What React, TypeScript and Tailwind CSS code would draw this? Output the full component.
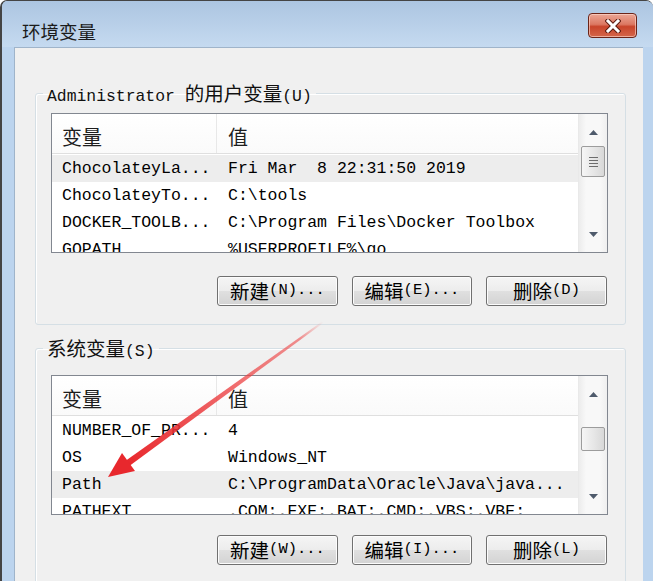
import React from "react";

const MONO = "font-['Liberation_Mono','Noto_Sans_CJK_SC',monospace]";
const CJK = "font-['Noto_Sans_CJK_SC',sans-serif]";

type Row = [string, string];

const userRows: Row[] = [
    ["ChocolateyLa...", "Fri Mar  8 22:31:50 2019"],
    ["ChocolateyTo...", "C:\\tools"],
    ["DOCKER_TOOLB...", "C:\\Program Files\\Docker Toolbox"],
    ["GOPATH", "%USERPROFILE%\\go"],
];

const systemRows: Row[] = [
    ["NUMBER_OF_PR...", "4"],
    ["OS", "Windows_NT"],
    ["Path", "C:\\ProgramData\\Oracle\\Java\\java..."],
    ["PATHEXT", ".COM;.EXE;.BAT;.CMD;.VBS;.VBE;"],
];

function Zh({ children }: { children: React.ReactNode }) {
    return <span className={`${CJK} text-[19.5px]`}>{children}</span>;
}

function Arrow({ up }: { up?: boolean }) {
    return (
        <svg width="9" height="5" viewBox="0 0 9 5">
            <path d={up ? "M4.5 0 L9 5 L0 5Z" : "M0 0 L9 0 L4.5 5Z"} fill="#4f5b6c" />
        </svg>
    );
}

function ScrollBar({ thumbTop, thumbH, grip }: { thumbTop: number; thumbH: number; grip?: boolean }) {
    return (
        <div className="w-[29px] flex flex-col border-l border-[#e9e9e9] bg-[linear-gradient(to_right,#ececec,#f8f8f8_25%,#f8f8f8_75%,#efefef)]">
            <div className="h-[30px] flex items-center justify-center pt-[6px]">
                <Arrow up />
            </div>
            <div className="flex-1 px-[2px]">
                <div
                    className="w-[24px] rounded-[2px] border border-[#9c9c9c] bg-[linear-gradient(to_right,#f6f6f6,#e6e6e6_55%,#d8d8d8)] flex flex-col items-center justify-center gap-[2px]"
                    style={{ marginTop: thumbTop, height: thumbH }}
                >
                    {grip && (
                        <>
                            <div className="w-[9px] h-[1px] bg-[#6d6d6d]" />
                            <div className="w-[9px] h-[1px] bg-[#6d6d6d]" />
                            <div className="w-[9px] h-[1px] bg-[#6d6d6d]" />
                            <div className="w-[9px] h-[1px] bg-[#6d6d6d]" />
                        </>
                    )}
                </div>
            </div>
            <div className="h-[30px] flex items-center justify-center pb-[6px]">
                <Arrow />
            </div>
        </div>
    );
}

function ListView({ rows, selected, h, thumbTop, thumbH, grip }: {
    rows: Row[]; selected: number; h: string; thumbTop: number; thumbH: number; grip?: boolean;
}) {
    return (
        <div className={`${h} flex border border-[#828790] bg-white overflow-hidden`}>
            <div className="flex-1 flex flex-col overflow-hidden">
                <div className="h-[40px] shrink-0 flex border-b border-[#dfdfdf] bg-[linear-gradient(to_bottom,#ffffff,#fafafa)] text-[#1e1e1e]">
                    <div className={`${CJK} w-[165px] border-r border-[#e8e8e8] pl-[10px] pt-[8px] text-[20px] leading-[30px]`}>变量</div>
                    <div className={`${CJK} pl-[11px] pt-[8px] text-[20px] leading-[30px]`}>值</div>
                </div>
                <div className="h-[1px] shrink-0" />
                {rows.map((r, i) => (
                    <div
                        key={r[0]}
                        className={`${MONO} h-[27px] shrink-0 flex items-center text-[16.5px] leading-[27px] text-black whitespace-pre ${i === selected ? "bg-[#ededed]" : ""}`}
                    >
                        <div className="w-[165px] pl-[10px]">{r[0]}</div>
                        <div className="pl-[11px]">{r[1]}</div>
                    </div>
                ))}
            </div>
            <ScrollBar thumbTop={thumbTop} thumbH={thumbH} grip={grip} />
        </div>
    );
}

function WinButton({ zh, rest, w }: { zh: string; rest: string; w: string }) {
    return (
        <button className={`${w} h-[30px] rounded-[3px] border border-[#707070] shadow-[inset_0_0_0_1px_#fcfcfc] bg-[linear-gradient(to_bottom,#f5f5f5_0%,#ececec_50%,#e0e0e0_50%,#d3d3d3_100%)] flex items-center justify-center text-black`}>
            <Zh>{zh}</Zh>
            <span className={`${MONO} text-[15.5px]`}>{rest}</span>
        </button>
    );
}

function Group({ label, children, className }: { label: React.ReactNode; children: React.ReactNode; className: string }) {
    return (
        <fieldset className={`${className} border border-[#d5dfe5] rounded-[3px] shadow-[inset_1px_1px_0_#ffffff]`}>
            <legend className="ml-[7px] px-[4px] h-[22px] leading-[22px] text-[#111]">{label}</legend>
            {children}
        </fieldset>
    );
}

export default function App() {
    return (
        <div className="relative w-[653px] h-[581px] overflow-hidden flex flex-col border-l-[2px] border-t border-[#444] rounded-tl-[7px] rounded-tr-[7px] bg-[#bcd4ee]">
            {/* Title bar */}
            <div className="h-[46px] shrink-0 flex items-start justify-between pl-[20px] pr-[16px] bg-[linear-gradient(to_bottom,#acc5e1,#c5daf0)]">
                <span className={`${CJK} mt-[19px] text-[18.5px] leading-[22px] text-[#1b1b1b]`}>环境变量</span>
                <button className="mt-[12px] w-[49px] h-[25px] rounded-[4px] border border-[#6b2418] bg-[linear-gradient(to_bottom,#eba796_0%,#dc7862_45%,#c8442a_55%,#d4664a_100%)] shadow-[inset_0_0_0_1px_rgba(255,220,210,0.6)] flex items-center justify-center">
                    <svg width="16" height="14" viewBox="0 0 16 14">
                        <path d="M3 2 L13 12 M13 2 L3 12" stroke="#5a1a10" strokeWidth="5" strokeLinecap="square" />
                        <path d="M3 2 L13 12 M13 2 L3 12" stroke="#ffffff" strokeWidth="3" strokeLinecap="square" />
                    </svg>
                </button>
            </div>

            <div className="flex flex-1 min-h-0">
                <div className="w-[12px] shrink-0 bg-[#bcd4ee]" />
                <div className="flex-1 flex flex-col border-l border-t border-[#9fb4ca] bg-[#f0f0f0] pl-[20px] pr-[17px] pt-[34px]">
                    <Group
                        className=""
                        label={
                            <span className={`${MONO} text-[16.4px]`}>
                                Administrator <Zh>的用户变量</Zh>(U)
                            </span>
                        }
                    >
                        <div className="flex flex-col pl-[15px] pr-[17px] pt-[9px] pb-[18px]">
                            <ListView rows={userRows} selected={0} h="h-[140px]" thumbTop={2} thumbH={31} grip />
                            <div className="flex justify-end gap-[14px] pt-[23px] pr-[1px]">
                                <WinButton zh="新建" rest="(N)..." w="w-[121px]" />
                                <WinButton zh="编辑" rest="(E)..." w="w-[120px]" />
                                <WinButton zh="删除" rest="(D)" w="w-[121px]" />
                            </div>
                        </div>
                    </Group>

                    <Group
                        className="mt-[12px]"
                        label={
                            <span className={`${MONO} text-[16.4px]`}>
                                <Zh>系统变量</Zh>(S)
                            </span>
                        }
                    >
                        <div className="flex flex-col pl-[15px] pr-[17px] pt-[16px] pb-[18px]">
                            <ListView rows={systemRows} selected={2} h="h-[140px]" thumbTop={21} thumbH={24} />
                            <div className="flex justify-end gap-[14px] pt-[20px] pr-[1px]">
                                <WinButton zh="新建" rest="(W)..." w="w-[121px]" />
                                <WinButton zh="编辑" rest="(I)..." w="w-[120px]" />
                                <WinButton zh="删除" rest="(L)" w="w-[121px]" />
                            </div>
                        </div>
                    </Group>
                </div>
                <div className="w-[10px] shrink-0 bg-[#bcd4ee]" />
            </div>

            {/* red annotation arrow */}
            <svg className="absolute -left-[2px] -top-[1px] pointer-events-none" width="653" height="581" viewBox="0 0 653 581">
                <defs>
                    <linearGradient id="arrowFade" x1="323" y1="322" x2="128" y2="463" gradientUnits="userSpaceOnUse">
                        <stop offset="0" stopColor="#ee4a4a" stopOpacity="0" />
                        <stop offset="0.12" stopColor="#ee4a4a" stopOpacity="0.6" />
                        <stop offset="1" stopColor="#e8282d" stopOpacity="1" />
                    </linearGradient>
                </defs>
                <polygon points="323.6,322.8 130,465.5 126,460.5 322.4,321.2" fill="url(#arrowFade)" />
                <polygon points="108,477 135,471 122,453" fill="#e8282d" />
            </svg>
        </div>
    );
}
